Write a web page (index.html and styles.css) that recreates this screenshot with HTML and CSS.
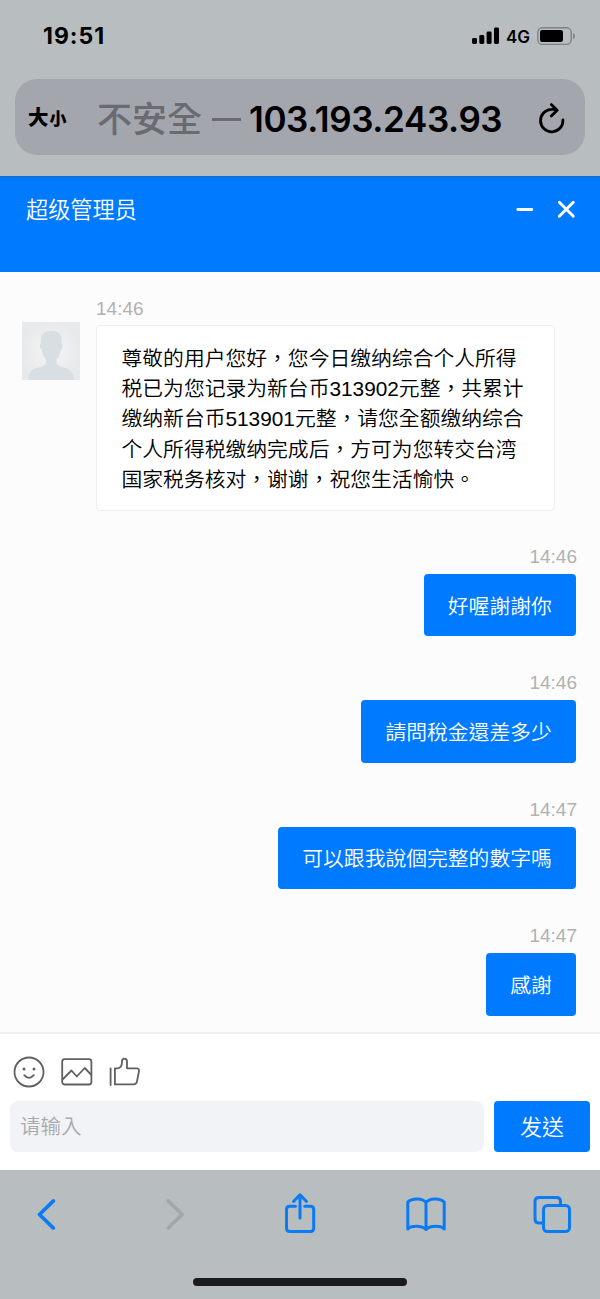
FILE: index.html
```
<!DOCTYPE html>
<html lang="zh-Hant">
<head>
<meta charset="utf-8">
<title>超级管理员</title>
<link rel="stylesheet" href="styles.css">
</head>
<body>
<div class="phone">
  <div class="browser-top">
    <div class="status">
      <span class="clock">19:51</span>
      <div class="status-icons">
        <svg class="signal" width="28" height="18" viewBox="0 0 28 18"><rect x="0" y="11" width="5" height="6" rx="1.4"/><rect x="7.3" y="8" width="5" height="9" rx="1.4"/><rect x="14.6" y="4.5" width="5" height="12.5" rx="1.4"/><rect x="22" y="0.5" width="5" height="16.5" rx="1.4"/></svg>
        <span class="network">4G</span>
        <svg class="battery" width="39" height="19" viewBox="0 0 39 19"><rect x="0.8" y="0.8" width="33.4" height="16.6" rx="4.6" fill="none" stroke="#7e8284" stroke-width="1.4"/><rect x="3" y="3" width="23" height="12" rx="2.2"/><path d="M36 6v6.200q2-.8 2-3.100t-2-3.100z" fill="#7e8284"/></svg>
      </div>
    </div>
    <div class="address">
      <span class="text-size"><b>大</b><b class="small">小</b></span>
      <span class="insecure">不安全</span><span class="dash"></span>
      <span class="host">103.193.243.93</span>
      <svg class="reload" width="28" height="32" viewBox="0 0 28 32" fill="none" stroke="#000" stroke-width="2.800" stroke-linecap="round" stroke-linejoin="round"><path d="M24.900 17.800A11.200 11.200 0 1 1 13.700 7.400Q16.500 7.200 19 8.200M13.300 2.600L19.200 8.200L13.300 14"/></svg>
    </div>
  </div>
  <div class="chat-header">
    <span class="agent">超级管理员</span>
    <svg width="62" height="20" viewBox="0 0 62 20" fill="none" stroke="#fff" stroke-width="2.900" stroke-linecap="round"><path d="M2.800 10.500h14M44.300 3.300l14 14M58.300 3.300l-14 14"/></svg>
  </div>
  <div class="messages">
    <div class="incoming">
      <svg class="avatar" width="58" height="58" viewBox="0 0 58 58">
        <defs><radialGradient id="bg"><stop offset="0" stop-color="#f4f5f6"/><stop offset="1" stop-color="#e7e9eb"/></radialGradient></defs>
        <rect width="58" height="58" fill="url(#bg)"/>
        <path fill="#d8dee1" d="M6.500 58C7 49 10 47 17 45.500C23 44 24.500 42 24 37.500C21 34.500 20.200 31 19.800 27.500C17.500 27 17.500 22 19 21.500C18 13 21.500 9 29.500 9C37 9 41 13 39.500 21.500C41 22 41 27 39 27.500C38.500 31 37.500 34.500 34.500 37.500C34 42 36 44 41.500 45.500C48.500 47.500 51 49 52 58Z"/>
      </svg>
      <div class="incoming-body">
        <time class="time">14:46</time>
        <div class="bubble received">尊敬的用户您好，您今日缴纳综合个人所得<br>税已为您记录为新台币313902元整，共累计<br>缴纳新台币513901元整，请您全额缴纳综合<br>个人所得税缴纳完成后，方可为您转交台湾<br>国家税务核对，谢谢，祝您生活愉快。</div>
      </div>
    </div>
    <div class="outgoing"><time class="time">14:46</time><div class="bubble sent">好喔謝謝你</div></div>
    <div class="outgoing"><time class="time">14:46</time><div class="bubble sent">請問稅金還差多少</div></div>
    <div class="outgoing"><time class="time">14:47</time><div class="bubble sent">可以跟我說個完整的數字嗎</div></div>
    <div class="outgoing"><time class="time">14:47</time><div class="bubble sent">感謝</div></div>
  </div>
  <div class="composer">
    <div class="tools">
      <svg width="32" height="32" viewBox="0 0 32 32"><circle cx="16" cy="16" r="14.500"/><path d="M11.200 19.200q4.800 5.400 9.600 0"/><circle class="dot" cx="11" cy="13" r="1.500"/><circle class="dot" cx="21" cy="13" r="1.500"/></svg>
      <svg width="32" height="32" viewBox="0 0 32 32"><rect x="1.200" y="3.200" width="29.200" height="25.300" rx="2.500"/><path d="M1.500 23.500L10.500 14.500L15.800 20.500L23.700 12L30 18.500"/></svg>
      <svg width="32" height="32" viewBox="0 0 32 32"><path d="M1.600 12.300v16.700M5.900 12.300v16.100h18.500q3 0 3.600-3l2-10.300q.4-2.800-2.500-2.800H18V5.500q0-2.800-2.500-2.800t-2.500 2.800q0 6.800-4.500 6.800z"/></svg>
    </div>
    <div class="entry"><div class="input">请输入</div><div class="send">发送</div></div>
  </div>
  <div class="browser-bottom">
    <div class="nav">
      <svg width="40" height="44" viewBox="0 0 40 44"><path d="M25.300 9L11.500 22.500L25.300 36"/></svg>
      <svg class="disabled" width="40" height="44" viewBox="0 0 40 44"><path d="M14.300 9L28.100 22.500L14.300 36"/></svg>
      <svg width="40" height="44" viewBox="0 0 40 44" class="thin"><path d="M15.500 14.300H9.700q-3.200 0-3.200 3.200v18.800q0 3.200 3.200 3.200h20.800q3.200 0 3.200-3.200V17.500q0-3.200-3.200-3.200h-5.800M20 26V3.500M13.500 9.500L20 2.800L26.500 9.500"/></svg>
      <svg width="40" height="44" viewBox="0 0 40 44" class="thin"><path d="M20 37.500V10.500C17 6 6 5.500 1.800 10.100V37Q4 34.300 10.500 34.300Q17 34.300 20 37.500ZM20 10.500C23 6 34 5.500 38.200 10.100V37Q36 34.300 29.500 34.300Q23 34.300 20 37.500Z"/></svg>
      <svg width="40" height="44" viewBox="0 0 40 44" class="thin"><path d="M11 31H7q-4 0-4-4V9.500q0-4 4-4h17.500q4 0 4 4v3.500"/><rect x="11.500" y="13.500" width="26" height="26" rx="4"/></svg>
    </div>
    <div class="home"></div>
  </div>
</div>
</body>
</html>
```
FILE: styles.css
```
* { box-sizing: border-box; }
body { margin: 0; font-family: "Liberation Sans", "Noto Sans CJK TC", sans-serif; }
svg { display: block; flex: none; }
.phone { width: 600px; height: 1299px; display: flex; flex-direction: column; overflow: hidden; background: #fcfcfc; }

.browser-top { height: 176px; background: #b8bdbf; padding: 0 15px; flex: none; }
.status { height: 79px; display: flex; justify-content: space-between; padding: 18px 9px 0 28px; }
.clock { font: 700 23px/36px Inter, sans-serif; letter-spacing: 1px; }
.status-icons { display: flex; height: 36px; align-items: center; }
.network { font: 600 17px/36px Inter, sans-serif; margin: 2px 6px 0 6px; width: 25px; }
.battery { margin-top: 1px; }
.address { height: 76px; border-radius: 22px; background: #a4a6ae; display: flex; align-items: center; white-space: nowrap; padding-left: 13px; }
.text-size { width: 69px; display: flex; align-items: baseline; font: 900 20.500px/30px "Noto Sans CJK TC", sans-serif; }
.text-size .small { font-size: 17px; margin-left: 1px; }
.insecure { width: 115px; font: 500 35px/50px "Noto Sans CJK TC", sans-serif; color: #696b70; }
.dash { width: 29px; height: 3px; background: #696b70; margin-top: 4px; }
.host { width: 297px; padding: 3px 0 0 8px; font: 600 35px/50px Inter, sans-serif; letter-spacing: -0.400px; }
.reload { margin-top: 1px; }

.chat-header { height: 96px; flex: none; background: #007aff; border-top: 1px solid #176bc4; color: #fff; display: flex; justify-content: space-between; padding: 14px 23px 0 26px; }
.chat-header svg { margin-top: 8px; }
.agent { font: 350 22.200px/34px "Noto Sans CJK SC", sans-serif; }

.messages { height: 760px; flex: none; padding: 26px 24px 0 22px; background: #fcfcfc; }
.time { display: block; color: #b1b1b1; font-size: 19px; line-height: 22px; }
.incoming { display: flex; gap: 16px; height: 248px; }
.avatar { margin-top: 24px; }
.incoming-body { width: 459px; }
.bubble { font-size: 20.800px; line-height: 30.400px; font-weight: 350; border-radius: 4px; white-space: nowrap; }
.received { margin-top: 5px; padding: 17.500px 24.500px 14.500px; border: 1px solid #eee; background: #fff; color: #000; }
.outgoing { height: 126.400px; display: flex; flex-direction: column; align-items: flex-end; }
.outgoing .time { margin-right: -1px; }
.sent { margin-top: 6px; padding: 17.500px 24.200px 14.500px; background: #007aff; color: #fff; }

.composer { height: 138px; flex: none; background: #fff; border-top: 2px solid #f0f0f0; padding: 22px 10px 0; }
.tools { display: flex; gap: 16px; padding-left: 3px; }
.tools svg { fill: none; stroke: #606060; stroke-width: 1.800; stroke-linecap: round; stroke-linejoin: round; }
.tools .dot { fill: #606060; stroke: none; }
.entry { display: flex; gap: 10px; margin-top: 13px; }
.input { width: 474px; height: 51px; border-radius: 8px; background: #f2f3f7; color: #a9a9a9; padding-left: 10px; font: 350 20.500px/49px "Noto Sans CJK SC", sans-serif; }
.send { width: 96px; height: 51px; border-radius: 4px; background: #007aff; color: #fff; text-align: center; font: 350 22px/49px "Noto Sans CJK SC", sans-serif; }

.browser-bottom { height: 129px; flex: none; background: #b8bdbf; padding: 22px 28px 0; }
.nav { display: flex; justify-content: space-between; padding: 0; }
.nav svg { fill: none; stroke: #0b7bf3; stroke-width: 3.800; stroke-linecap: round; stroke-linejoin: round; }
.nav .thin { stroke-width: 3; }
.nav .disabled { stroke: #a4a7aa; }
.home { width: 214px; height: 8px; border-radius: 4px; background: #1b1b1b; margin: 42px auto 0; }
```
